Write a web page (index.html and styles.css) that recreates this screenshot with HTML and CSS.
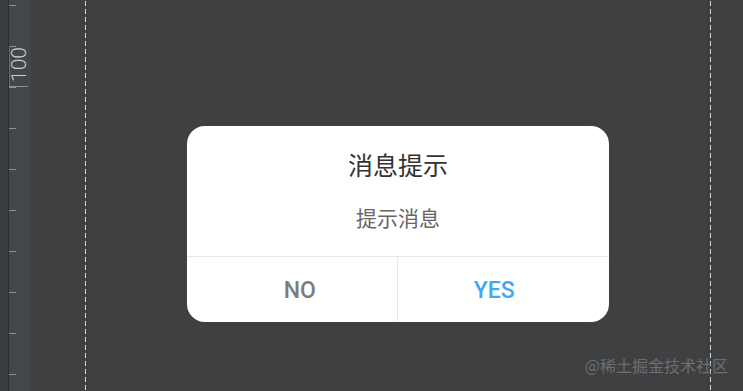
FILE: index.html
```html
<!DOCTYPE html>
<html lang="zh">
<head>
<meta charset="utf-8">
<link rel="stylesheet" href="styles.css">
</head>
<body>
<div class="screen">
  <div class="ruler">
    <div class="ruler-edge"></div>
    <div class="ruler-track">
      <div class="ruler-mark"><span class="ruler-label">100</span></div>
    </div>
  </div>
  <div class="gutter"></div>
  <div class="dash"></div>
  <div class="canvas">
    <div class="dialog">
      <div class="dialog-title">消息提示</div>
      <div class="dialog-message">提示消息</div>
      <div class="dialog-actions">
        <div class="btn btn-no">NO</div>
        <div class="btn btn-yes">YES</div>
      </div>
    </div>
  </div>
  <div class="dash"></div>
  <div class="watermark">@稀土掘金技术社区</div>
</div>
</body>
</html>
```

FILE: styles.css
```css
html, body {
  margin: 0;
  padding: 0;
}
body {
  background: #3f4042;
  width: 743px;
  height: 391px;
  overflow: hidden;
}
.screen {
  position: relative;
  display: flex;
  width: 743px;
  height: 391px;
}
.ruler {
  display: flex;
  width: 31px;
  flex: none;
  background: #3a3c3e;
}
.ruler-edge {
  width: 8px;
  background: #393b3d;
  border-right: 1px solid #2c2e30;
}
.ruler-track {
  flex: 1;
  background-color: #44474a;
  background-image: linear-gradient(to bottom, #8d9092 0, #8d9092 1px, transparent 1px);
  background-size: 7px 41px;
  background-repeat: repeat-y;
  background-position: 0 5px;
  padding-top: 46px;
}
.ruler-mark {
  width: 19px;
  height: 41px;
  border-left: 1px solid #6b6e70;
  border-bottom: 1px solid #8d9092;
  box-sizing: border-box;
  display: flex;
  justify-content: center;
}
.ruler-label {
  writing-mode: vertical-rl;
  transform: rotate(180deg);
  font-family: Roboto, "Liberation Sans", sans-serif;
  font-weight: 300;
  font-size: 21px;
  line-height: 18px;
  color: #c9ccce;
  padding-bottom: 2px;
  padding-top: 4px;
}
.gutter {
  width: 54px;
  flex: none;
}
.dash {
  width: 1px;
  flex: none;
  background-image: linear-gradient(to bottom, #d6d6d6 0, #d6d6d6 5px, transparent 5px);
  background-size: 1px 8px;
  background-position: 0 1px;
}
.canvas {
  width: 624px;
  flex: none;
  display: flex;
  justify-content: center;
  align-items: flex-start;
  padding-top: 126px;
  box-sizing: border-box;
}
.dialog {
  width: 422px;
  height: 196px;
  background: #ffffff;
  border-radius: 18px;
  display: flex;
  flex-direction: column;
  overflow: hidden;
  font-family: "Noto Sans CJK SC", "Noto Sans", sans-serif;
  text-align: center;
}
.dialog-title {
  padding-top: 22px;
  font-size: 25px;
  line-height: 32px;
  color: #333333;
}
.dialog-message {
  padding-top: 23px;
  padding-bottom: 25px;
  font-size: 21px;
  line-height: 28px;
  color: #666666;
}
.dialog-actions {
  flex: 1;
  display: flex;
  border-top: 1px solid #e8e8e8;
}
.btn {
  flex: 1;
  display: flex;
  align-items: center;
  justify-content: center;
  font-family: Roboto, "Liberation Sans", sans-serif;
  font-weight: 500;
  font-size: 23px;
  padding-top: 1px;
}
.btn-no {
  color: #7d7d7d;
  border-right: 1px solid #e8e8e8;
  padding-left: 16px;
}
.btn-yes {
  color: #3fa9f3;
  padding-right: 18px;
}
.watermark {
  position: absolute;
  right: 15px;
  top: 354px;
  font-family: "Noto Sans CJK SC", "Noto Sans", sans-serif;
  font-size: 16px;
  line-height: 22px;
  color: #6d6e70;
}
```
